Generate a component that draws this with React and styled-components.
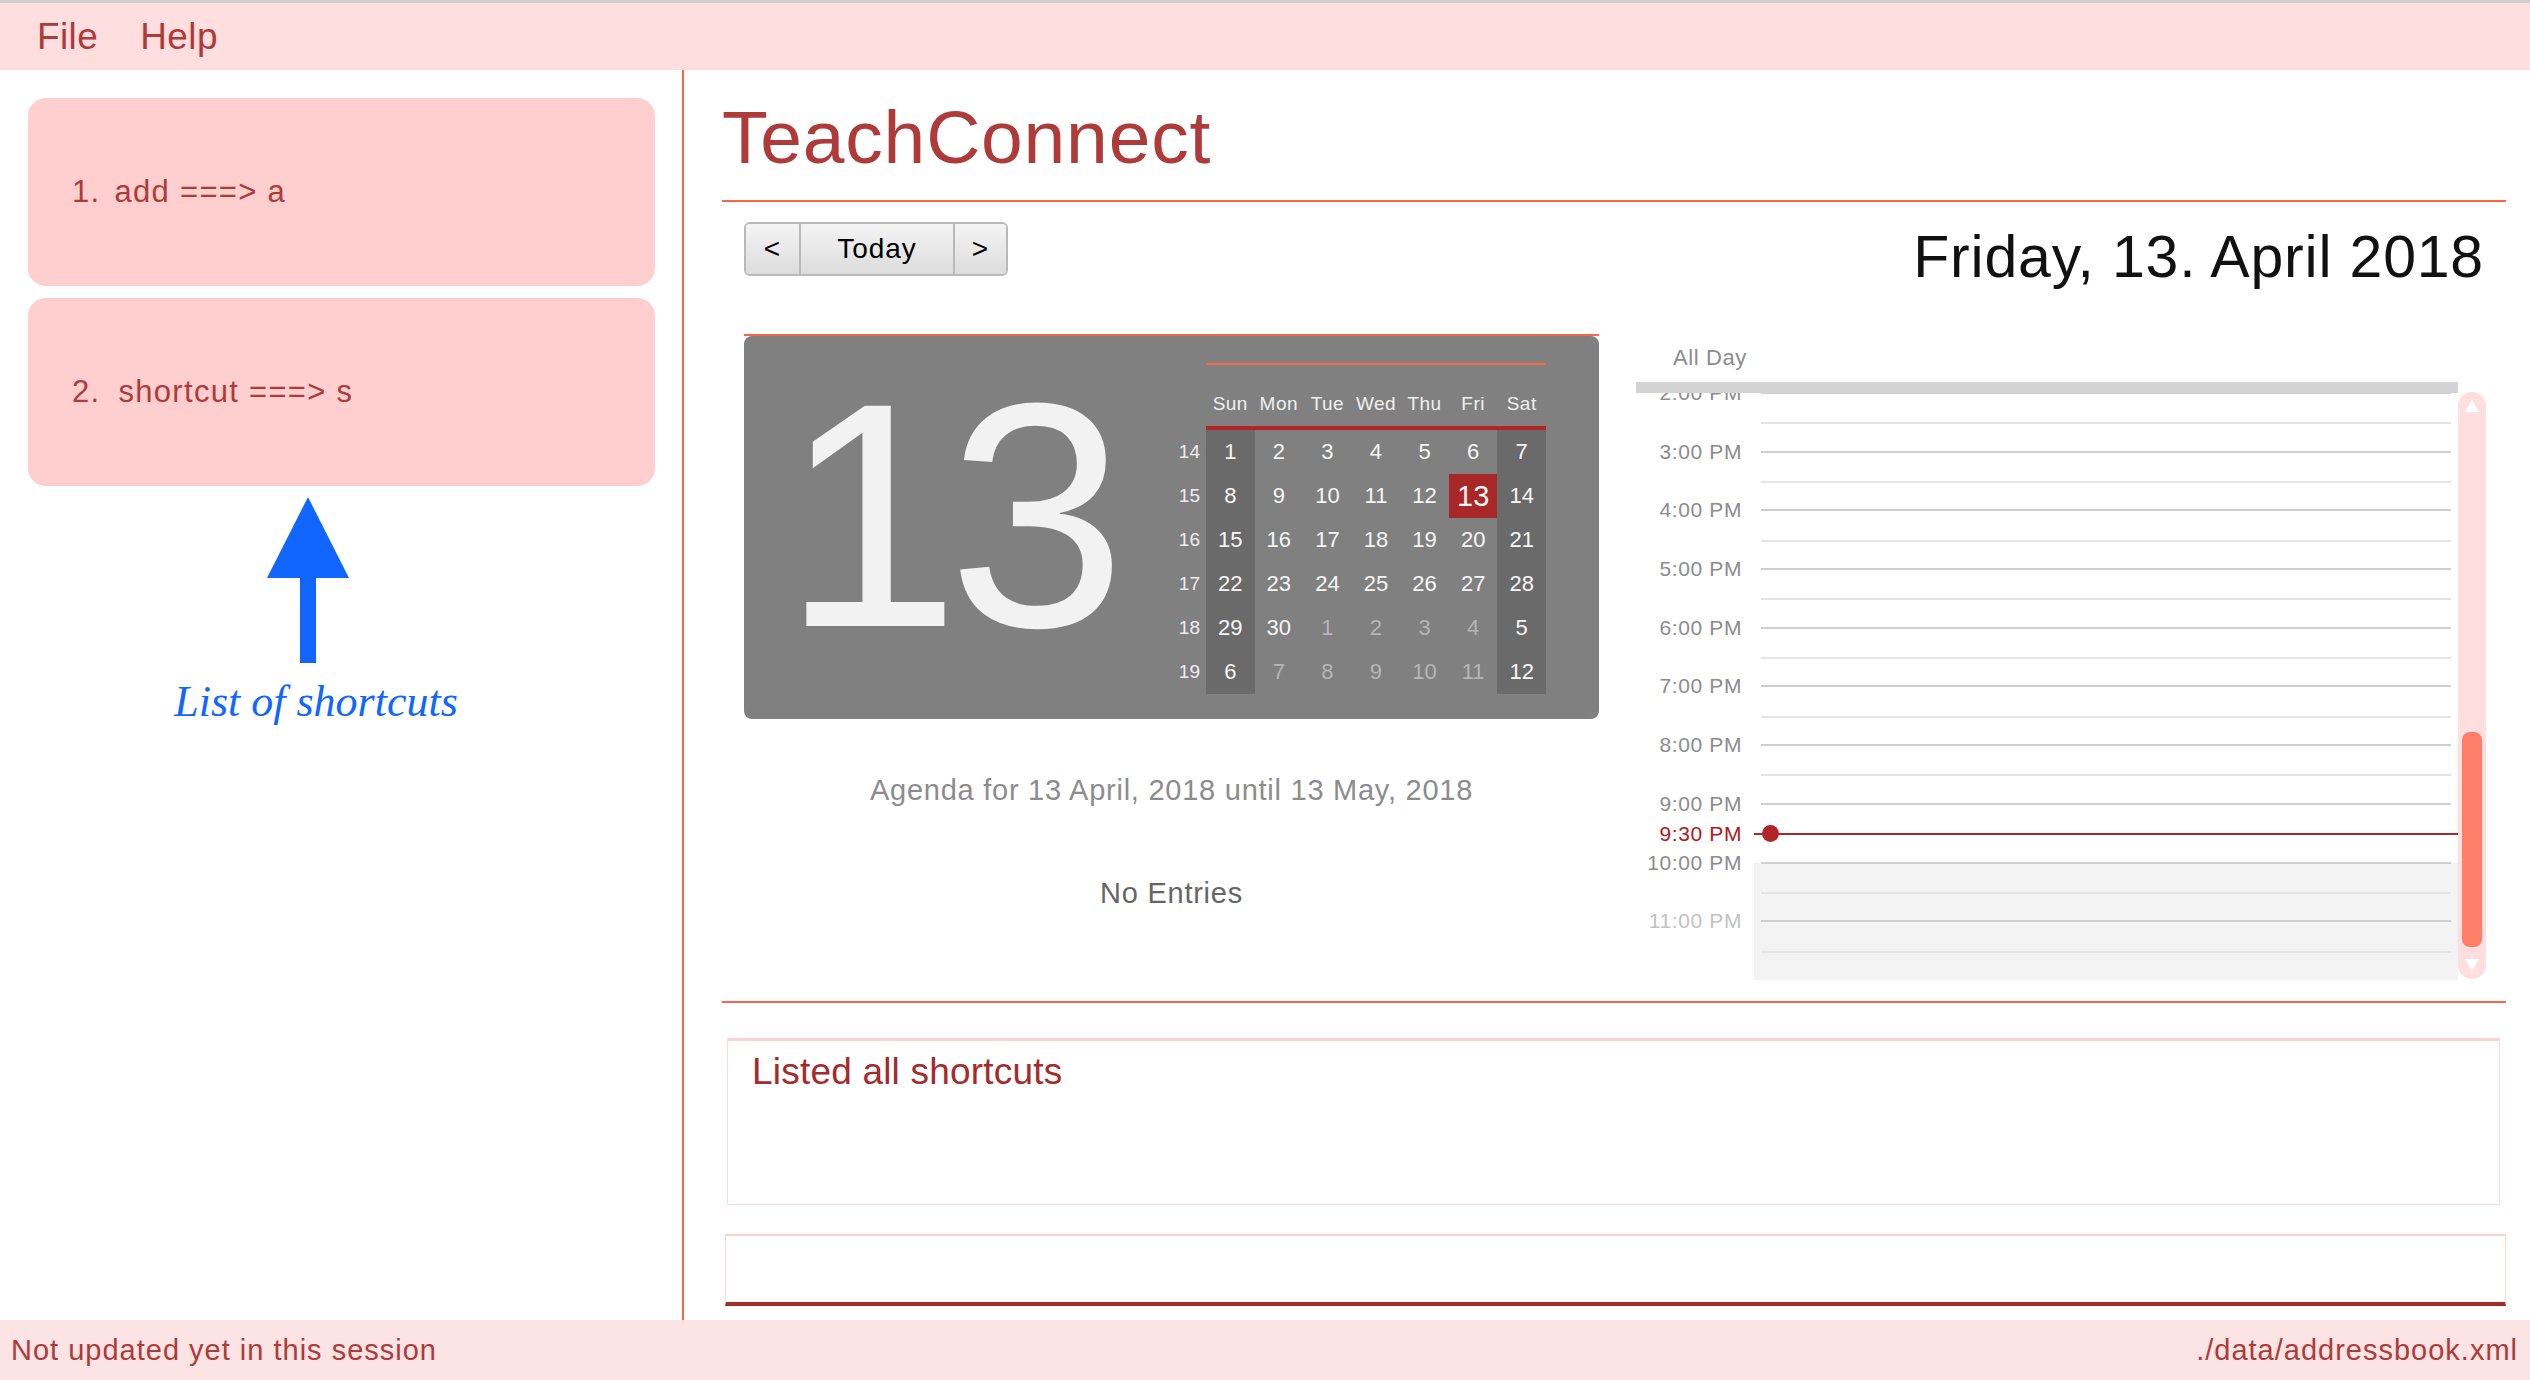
import React from "react";
import styled, { createGlobalStyle } from "styled-components";

const RED = "#ae3a3a";
const TOMATO = "#fb6549";
const FIREBRICK = "#b02626";
const SANS = `"Liberation Sans", Arial, sans-serif`;

const GlobalStyle = createGlobalStyle`
  html, body {
    margin: 0;
    padding: 0;
    background: #ffffff;
  }
  body {
    font-family: ${SANS};
  }
  * {
    box-sizing: border-box;
  }
`;

const Window = styled.div`
  width: 2530px;
  height: 1380px;
  display: flex;
  flex-direction: column;
  overflow: hidden;
  border-top: 3px solid #cfcfcf;
`;

const MenuBar = styled.div`
  height: 67px;
  flex-shrink: 0;
  display: flex;
  align-items: center;
  gap: 42px;
  padding-left: 37px;
  background: #ffdee0;
`;
const MenuItem = styled.span`
  font-size: 37px;
  letter-spacing: 0.4px;
  color: ${RED};
`;

const Main = styled.div`
  flex: 1;
  display: flex;
  min-height: 0;
`;

const Sidebar = styled.div`
  width: 684px;
  flex-shrink: 0;
  border-right: 2px solid ${TOMATO};
  padding: 28px 27px 0 28px;
`;
const ShortcutList = styled.div`
  display: flex;
  flex-direction: column;
  gap: 12px;
`;
const ShortcutCard = styled.div`
  height: 188px;
  display: flex;
  align-items: center;
  padding-left: 44px;
  border-radius: 18px;
  background: #ffcfcf;
  font-size: 31px;
  letter-spacing: 1.3px;
  color: ${RED};
`;
const ShortcutIndex = styled.span`
  margin-right: ${(p) => p.$gap}px;
`;

const Annotation = styled.div`
  width: 570px;
  margin-top: 11px;
  display: flex;
  flex-direction: column;
  align-items: center;
`;
const ArrowIcon = styled.svg`
  display: block;
  margin-right: 10px;
`;
const AnnotationLabel = styled.div`
  margin-top: 17px;
  margin-left: 6px;
  font-family: "Liberation Serif", "Times New Roman", serif;
  font-style: italic;
  font-size: 44px;
  line-height: 44px;
  color: #1166ff;
`;

const Content = styled.div`
  flex: 1;
  display: flex;
  flex-direction: column;
  padding: 30px 24px 0 38px;
`;
const Title = styled.h1`
  margin: 0;
  font-weight: normal;
  font-size: 75px;
  line-height: 75px;
  letter-spacing: 0.8px;
  color: ${RED};
`;
const Rule = styled.div`
  height: 2px;
  flex-shrink: 0;
  margin-top: ${(p) => p.$gap}px;
  background: ${TOMATO};
`;

const Toolbar = styled.div`
  height: 54px;
  margin-top: 20px;
  padding: 0 22px;
  display: flex;
  justify-content: space-between;
  align-items: flex-start;
`;
const NavGroup = styled.div`
  display: flex;
  height: 54px;
  border: 2px solid #b9b9b9;
  border-radius: 6px;
  overflow: hidden;
`;
const NavButton = styled.div`
  width: ${(p) => p.$w}px;
  display: flex;
  align-items: center;
  justify-content: center;
  background: linear-gradient(#f4f4f4, #dcdcdc);
  border-left: ${(p) => (p.$first ? "none" : "2px solid #b9b9b9")};
  font-size: 28px;
  letter-spacing: 1px;
  color: #000;
`;
const DateTitle = styled.div`
  margin-top: 6px;
  font-size: 59px;
  line-height: 59px;
  letter-spacing: 0.8px;
  color: #111;
`;

const Panels = styled.div`
  height: 725px;
  display: flex;
  padding-left: 22px;
`;

const AgendaColumn = styled.div`
  width: 855px;
  display: flex;
  flex-direction: column;
`;
const CalendarCard = styled.div`
  height: 383px;
  display: flex;
  align-items: flex-start;
  border-radius: 8px;
  background: #808080;
`;
const BigDay = styled.div`
  margin: 19px 0 0 38px;
  font-size: 320px;
  line-height: 320px;
  letter-spacing: -12px;
  color: #f2f2f2;
`;
const MiniCalendar = styled.div`
  width: 371px;
  margin: 27px 53px 0 auto;
`;
const MiniRule = styled.div`
  height: ${(p) => p.$h}px;
  margin-left: 31px;
  background: ${(p) => p.$color};
`;
const WeekGrid = styled.div`
  display: grid;
  grid-template-columns: 31px repeat(7, 1fr);
`;
const HeaderGrid = styled(WeekGrid)`
  height: 61px;
  align-items: end;
  padding-bottom: 13px;
`;
const DayHeader = styled.div`
  text-align: center;
  font-size: 19px;
  line-height: 19px;
  letter-spacing: 0.5px;
  color: #f0f0f0;
`;
const WeekNumber = styled.div`
  height: 44px;
  display: flex;
  align-items: center;
  justify-content: flex-end;
  padding-right: 6px;
  font-size: 19px;
  color: #eeeeee;
`;
const DayCell = styled.div`
  height: 44px;
  display: flex;
  align-items: center;
  justify-content: center;
  font-size: ${(p) => (p.$today ? 29 : 22)}px;
  color: ${(p) => (p.$muted ? "#b6b6b6" : "#f6f6f6")};
  background: ${(p) =>
    p.$today ? "#a82828" : p.$weekend ? "#6a6a6a" : "transparent"};
`;
const AgendaText = styled.div`
  margin-top: ${(p) => p.$gap}px;
  text-align: center;
  font-size: 29px;
  line-height: 29px;
  letter-spacing: 0.75px;
  color: ${(p) => p.$color};
`;

const DayColumn = styled.div`
  width: 850px;
  margin-left: 37px;
  display: flex;
  flex-direction: column;
`;
const AllDayLabel = styled.div`
  margin-top: 71px;
  padding-left: 37px;
  font-size: 22px;
  line-height: 22px;
  letter-spacing: 0.6px;
  color: #8c8c8c;
`;
const AllDayBar = styled.div`
  width: 822px;
  height: 11px;
  margin-top: 13px;
  background: #d3d3d3;
`;
const ScrollView = styled.div`
  height: 587px;
  display: flex;
`;
const Timeline = styled.div`
  width: 822px;
  position: relative;
  overflow: hidden;
`;
const TimelineRows = styled.div`
  margin-top: -29.35px;
`;
const HourRow = styled.div`
  height: 58.7px;
  display: flex;
`;
const TimeLabel = styled.div`
  width: 118px;
  flex-shrink: 0;
  align-self: center;
  padding-right: 12px;
  text-align: right;
  font-size: 21px;
  line-height: 24px;
  letter-spacing: 0.6px;
  color: ${(p) => p.$color || "#8c8c8c"};
`;
const SlotArea = styled.div`
  flex: 1;
  background: ${(p) =>
    p.$shade === "half"
      ? "linear-gradient(transparent 50%, #f3f3f3 50%)"
      : p.$shade === "full"
      ? "#f3f3f3"
      : "transparent"};
`;
const SlotLines = styled.div`
  height: 100%;
  margin: 0 7px;
  display: flex;
  align-items: center;
  border-top: 2px solid #e4e4e4;
`;
const HourLine = styled.div`
  width: 100%;
  height: 2px;
  margin-top: -2px;
  background: #cfcfcf;
`;
const NowIndicator = styled.div`
  position: absolute;
  left: 0;
  right: 0;
  top: 440px;
  height: 2px;
  display: flex;
  align-items: center;
`;
const NowTrack = styled.div`
  flex: 1;
  height: 2px;
  position: relative;
  background: ${FIREBRICK};
`;
const NowDot = styled.div`
  position: absolute;
  left: 8px;
  top: -8px;
  width: 17px;
  height: 17px;
  border-radius: 50%;
  background: ${FIREBRICK};
`;
const ScrollTrack = styled.div`
  width: 28px;
  height: 100%;
  margin-top: -1px;
  padding: 8px 0 8px;
  display: flex;
  flex-direction: column;
  align-items: center;
  border-radius: 14px;
  background: #ffdee0;
`;
const ScrollArrow = styled.div`
  width: 0;
  height: 0;
  border-left: 7px solid transparent;
  border-right: 7px solid transparent;
  ${(p) =>
    p.$down
      ? "border-top: 12px solid #fff; margin-top: 12px;"
      : "border-bottom: 12px solid #fff;"}
`;
const ScrollThumb = styled.div`
  width: 20px;
  height: 215px;
  margin-top: auto;
  border-radius: 8px;
  background: #ff7e67;
`;

const ResultBox = styled.div`
  height: 167px;
  margin: 35px 6px 0 5px;
  padding: 12px 24px;
  border: 1px solid #ffd8d8;
  border-top: 3px solid #ffd0d0;
  font-size: 37px;
  line-height: 37px;
  letter-spacing: 0.2px;
  color: #a52a2a;
`;
const CommandBox = styled.div`
  height: 72px;
  margin: 29px 0 0 3px;
  border: 1px solid #ffd8d8;
  border-top: 2px solid #ffd0d0;
  border-bottom: 4px solid #a52a2a;
  background: #fff;
`;

const StatusBar = styled.div`
  height: 60px;
  flex-shrink: 0;
  display: flex;
  align-items: center;
  justify-content: space-between;
  padding: 0 12px 0 11px;
  background: #fce4e4;
  font-size: 29px;
  letter-spacing: 1px;
  color: ${RED};
`;

const shortcuts = ["add ===> a", "shortcut ===> s"];
const dayNames = ["Sun", "Mon", "Tue", "Wed", "Thu", "Fri", "Sat"];
const weeks = [
  { no: 14, days: [1, 2, 3, 4, 5, 6, 7] },
  { no: 15, days: [8, 9, 10, 11, 12, 13, 14] },
  { no: 16, days: [15, 16, 17, 18, 19, 20, 21] },
  { no: 17, days: [22, 23, 24, 25, 26, 27, 28] },
  { no: 18, days: [29, 30, 1, 2, 3, 4, 5] },
  { no: 19, days: [6, 7, 8, 9, 10, 11, 12] },
];
const hours = [
  { label: "2:00 PM" },
  { label: "3:00 PM" },
  { label: "4:00 PM" },
  { label: "5:00 PM" },
  { label: "6:00 PM" },
  { label: "7:00 PM" },
  { label: "8:00 PM" },
  { label: "9:00 PM" },
  { label: "10:00 PM", shade: "half" },
  { label: "11:00 PM", shade: "full", color: "#c2c2c2" },
  { label: "", shade: "full" },
];

const Arrow = () => (
  <ArrowIcon width="82" height="166" viewBox="0 0 82 166">
    <polygon points="41,0 82,81 0,81" fill="#1166ff" />
    <rect x="33" y="80" width="16" height="86" fill="#1166ff" />
  </ArrowIcon>
);

const MonthView = () => (
  <MiniCalendar>
    <MiniRule $h={2} $color={TOMATO} />
    <HeaderGrid>
      <span />
      {dayNames.map((d) => (
        <DayHeader key={d}>{d}</DayHeader>
      ))}
    </HeaderGrid>
    <MiniRule $h={4} $color={FIREBRICK} />
    <WeekGrid>
      {weeks.map((week, wi) => (
        <React.Fragment key={week.no}>
          <WeekNumber>{week.no}</WeekNumber>
          {week.days.map((day, di) => {
            const weekend = di === 0 || di === 6;
            const muted = ((wi === 4 && di > 1) || wi === 5) && !weekend;
            return (
              <DayCell
                key={di}
                $weekend={weekend}
                $muted={muted}
                $today={wi === 1 && day === 13}
              >
                {day}
              </DayCell>
            );
          })}
        </React.Fragment>
      ))}
    </WeekGrid>
  </MiniCalendar>
);

const DaySchedule = () => (
  <DayColumn>
    <AllDayLabel>All Day</AllDayLabel>
    <AllDayBar />
    <ScrollView>
      <Timeline>
        <TimelineRows>
          {hours.map((h, i) => (
            <HourRow key={i}>
              <TimeLabel $color={h.color}>{h.label}</TimeLabel>
              <SlotArea $shade={h.shade}>
                <SlotLines>{h.label && <HourLine />}</SlotLines>
              </SlotArea>
            </HourRow>
          ))}
        </TimelineRows>
        <NowIndicator>
          <TimeLabel $color="#b01818">9:30 PM</TimeLabel>
          <NowTrack>
            <NowDot />
          </NowTrack>
        </NowIndicator>
      </Timeline>
      <ScrollTrack>
        <ScrollArrow />
        <ScrollThumb />
        <ScrollArrow $down />
      </ScrollTrack>
    </ScrollView>
  </DayColumn>
);

const App = () => {
  return (
    <>
      <GlobalStyle />
      <Window>
        <MenuBar>
          <MenuItem>File</MenuItem>
          <MenuItem>Help</MenuItem>
        </MenuBar>
        <Main>
          <Sidebar>
            <ShortcutList>
              {shortcuts.map((s, i) => (
                <ShortcutCard key={s}>
                  <ShortcutIndex $gap={i === 0 ? 14 : 18}>{i + 1}.</ShortcutIndex>
                  {s}
                </ShortcutCard>
              ))}
            </ShortcutList>
            <Annotation>
              <Arrow />
              <AnnotationLabel>List of shortcuts</AnnotationLabel>
            </Annotation>
          </Sidebar>
          <Content>
            <Title>TeachConnect</Title>
            <Rule $gap={25} />
            <Toolbar>
              <NavGroup>
                <NavButton $w={53} $first>
                  &lt;
                </NavButton>
                <NavButton $w={154}>Today</NavButton>
                <NavButton $w={53}>&gt;</NavButton>
              </NavGroup>
              <DateTitle>Friday, 13. April 2018</DateTitle>
            </Toolbar>
            <Panels>
              <AgendaColumn>
                <Rule $gap={58} />
                <CalendarCard>
                  <BigDay>13</BigDay>
                  <MonthView />
                </CalendarCard>
                <AgendaText $gap={57} $color="#8c8c8c">
                  Agenda for 13 April, 2018 until 13 May, 2018
                </AgendaText>
                <AgendaText $gap={74} $color="#666666">
                  No Entries
                </AgendaText>
              </AgendaColumn>
              <DaySchedule />
            </Panels>
            <Rule $gap={0} />
            <ResultBox>Listed all shortcuts</ResultBox>
            <CommandBox />
          </Content>
        </Main>
        <StatusBar>
          <span>Not updated yet in this session</span>
          <span>./data/addressbook.xml</span>
        </StatusBar>
      </Window>
    </>
  );
};

export default App;
